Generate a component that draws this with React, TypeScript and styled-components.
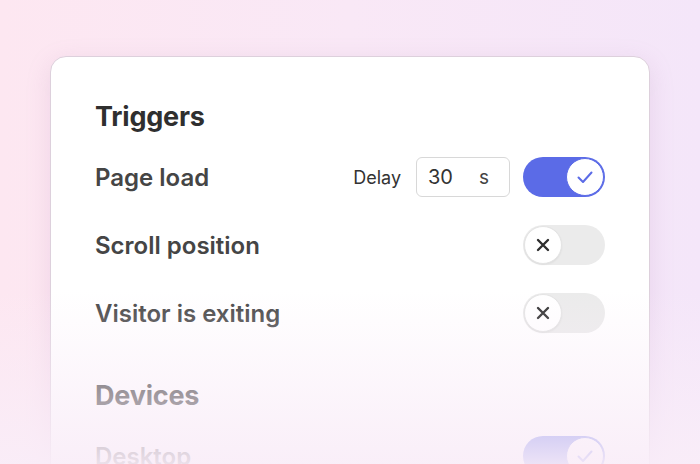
import React from "react";
import styled, { createGlobalStyle } from "styled-components";

const Global = createGlobalStyle`
  html, body { margin: 0; padding: 0; }
  body { font-family: Inter, "Noto Sans", sans-serif; -webkit-font-smoothing: antialiased; }
`;

const Page = styled.div`
  position: relative;
  width: 700px;
  height: 464px;
  overflow: hidden;
  box-sizing: border-box;
  padding: 56px 50px 0;
  background: linear-gradient(90deg, #fde7f1 0%, #f9e8f6 50%, #f4e6f9 100%);
  &::after {
    content: "";
    position: absolute;
    left: 0;
    right: 0;
    top: 290px;
    bottom: 0;
    background: linear-gradient(180deg, rgba(249, 237, 248, 0) 0%, rgba(249, 237, 248, 0.92) 100%);
    pointer-events: none;
  }
`;

const Card = styled.div`
  box-sizing: border-box;
  height: 460px;
  background: #ffffff;
  border: 1px solid #ddd0dc;
  border-radius: 16px;
  box-shadow: 0 6px 24px rgba(170, 120, 170, 0.18);
  padding: 44px 44px 0;
  display: flex;
  flex-direction: column;
`;

const Heading = styled.h2<{ $top?: number }>`
  margin: ${(p) => p.$top ?? 0}px 0 0;
  font-size: 27px;
  line-height: 32px;
  font-weight: 700;
  color: #2f2f2f;
  letter-spacing: -0.2px;
`;

const Rows = styled.div`
  display: flex;
  flex-direction: column;
  gap: 28px;
  margin-top: 24px;
`;

const Row = styled.div`
  display: flex;
  align-items: center;
  justify-content: space-between;
  height: 40px;
`;

const Label = styled.span`
  font-size: 24px;
  font-weight: 600;
  color: #454545;
`;

const Controls = styled.div`
  display: flex;
  align-items: center;
`;

const SmallLabel = styled.span`
  font-size: 18px;
  color: #333333;
  margin-right: 15px;
`;

const InputBox = styled.div`
  box-sizing: border-box;
  width: 94px;
  height: 40px;
  border: 1.5px solid #d8d8d8;
  border-radius: 6px;
  display: flex;
  align-items: center;
  justify-content: space-between;
  padding: 0 20px 0 11px;
  font-size: 20px;
  color: #333333;
  margin-right: 13px;
`;

const Unit = styled.span`
  font-size: 19px;
  color: #444;
`;

const Track = styled.div<{ $on: boolean }>`
  box-sizing: border-box;
  width: 82px;
  height: 40px;
  border-radius: 20px;
  background: ${(p) => (p.$on ? "#5b6be7" : "#ebebeb")};
  display: flex;
  align-items: center;
  justify-content: ${(p) => (p.$on ? "flex-end" : "flex-start")};
  padding: 0 1px;
`;

const Knob = styled.div<{ $on: boolean }>`
  box-sizing: border-box;
  width: 38px;
  height: 38px;
  border-radius: 50%;
  background: #ffffff;
  border: ${(p) => (p.$on ? "1.5px solid #5b6be7" : "1px solid #e4e4e4")};
  display: flex;
  align-items: center;
  justify-content: center;
  box-shadow: ${(p) => (p.$on ? "none" : "0 1px 2px rgba(0,0,0,0.06)")};
`;

const Toggle = ({ on }: { on: boolean }) => (
  <Track $on={on}>
    <Knob $on={on}>
      {on ? (
        <svg width="20" height="20" viewBox="0 0 20 20" fill="none">
          <path d="M3.5 10.5 L8 15 L16.5 5.5" stroke="#5b6be7" strokeWidth="2" strokeLinecap="round" strokeLinejoin="round" />
        </svg>
      ) : (
        <svg width="16" height="16" viewBox="0 0 16 16" fill="none">
          <path d="M3 3 L13 13 M13 3 L3 13" stroke="#2e2e2e" strokeWidth="2.4" strokeLinecap="round" />
        </svg>
      )}
    </Knob>
  </Track>
);

export default function App() {
  return (
    <>
      <Global />
      <Page>
        <Card>
          <Heading>Triggers</Heading>
          <Rows>
            <Row>
              <Label>Page load</Label>
              <Controls>
                <SmallLabel>Delay</SmallLabel>
                <InputBox>
                  <span>30</span>
                  <Unit>s</Unit>
                </InputBox>
                <Toggle on />
              </Controls>
            </Row>
            <Row>
              <Label>Scroll position</Label>
              <Toggle on={false} />
            </Row>
            <Row>
              <Label>Visitor is exiting</Label>
              <Toggle on={false} />
            </Row>
          </Rows>
          <Heading $top={47}>Devices</Heading>
          <Rows>
            <Row>
              <Label>Desktop</Label>
              <Toggle on />
            </Row>
          </Rows>
        </Card>
      </Page>
    </>
  );
}
